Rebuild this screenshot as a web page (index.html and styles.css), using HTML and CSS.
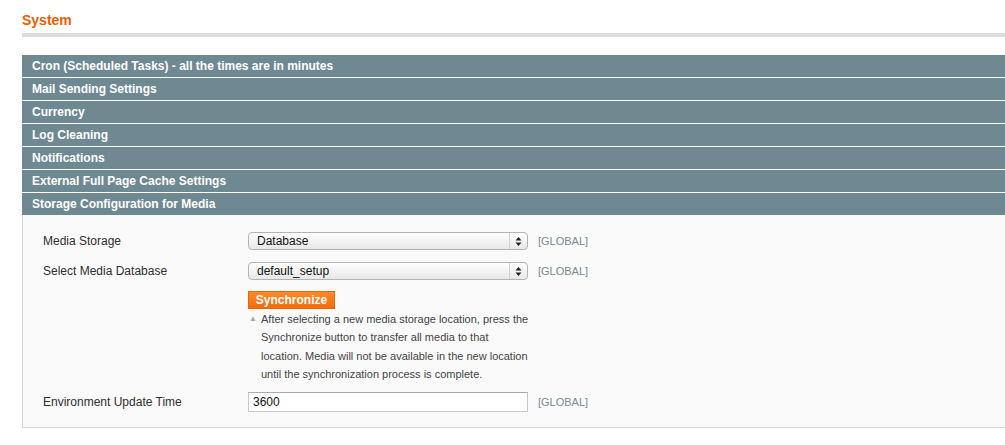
FILE: index.html
```html
<!DOCTYPE html>
<html lang="en">
<head>
  <meta charset="UTF-8">
  <title>System Configuration</title>
  <link rel="stylesheet" href="styles.css">
</head>
<body>
  <div class="page">
    <div class="page-head">
      <h3>System</h3>
    </div>

    <div class="section-list">
      <div class="section-head">Cron (Scheduled Tasks) - all the times are in minutes</div>
      <div class="section-head">Mail Sending Settings</div>
      <div class="section-head">Currency</div>
      <div class="section-head">Log Cleaning</div>
      <div class="section-head">Notifications</div>
      <div class="section-head">External Full Page Cache Settings</div>
      <div class="section-head">Storage Configuration for Media</div>

      <div class="section-body">
        <div class="form-row">
          <label class="label">Media Storage</label>
          <div class="value">
            <div class="select">
              <span class="select-text">Database</span>
              <span class="select-arrow">
                <svg width="7" height="11" viewBox="0 0 7 11"><path d="M3.5 1 L6.5 4.5 H0.5 Z M3.5 10 L6.5 6.5 H0.5 Z" fill="#222"/></svg>
              </span>
            </div>
          </div>
          <div class="scope">[GLOBAL]</div>
        </div>

        <div class="form-row">
          <label class="label">Select Media Database</label>
          <div class="value">
            <div class="select">
              <span class="select-text">default_setup</span>
              <span class="select-arrow">
                <svg width="7" height="11" viewBox="0 0 7 11"><path d="M3.5 1 L6.5 4.5 H0.5 Z M3.5 10 L6.5 6.5 H0.5 Z" fill="#222"/></svg>
              </span>
            </div>
          </div>
          <div class="scope">[GLOBAL]</div>
        </div>

        <div class="form-row form-row-sync">
          <div class="label"></div>
          <div class="value">
            <button class="btn-sync" type="button">Synchronize</button>
            <p class="note">
              <span class="note-arrow">&#9650;</span>
              <span>After selecting a new media storage location, press the<br>Synchronize button to transfer all media to that<br>location. Media will not be available in the new location<br>until the synchronization process is complete.</span>
            </p>
          </div>
          <div class="scope"></div>
        </div>

        <div class="form-row form-row-last">
          <label class="label label-input">Environment Update Time</label>
          <div class="value">
            <input class="input-text" type="text" value="3600">
          </div>
          <div class="scope scope-input">[GLOBAL]</div>
        </div>
      </div>
    </div>
  </div>
</body>
</html>
```

FILE: styles.css
```css
body {
  margin: 0;
  font-family: "Liberation Sans", Arial, sans-serif;
  font-size: 12px;
  color: #2f2f2f;
  background-color: #fff;
  overflow: hidden;
}

.page {
  padding: 12px 0 0 22px;
  margin-right: -10px;
}

.page-head {
  border-bottom: 4px solid #ddd;
  height: 21px;
  margin-bottom: 18px;
}

.page-head h3 {
  margin: 0;
  font-size: 14px;
  line-height: 17px;
  color: #eb5e00;
  font-weight: bold;
}

.section-head {
  height: 22px;
  line-height: 22px;
  padding-left: 10px;
  margin-bottom: 1px;
  background-color: #6f8992;
  color: #fff;
  font-weight: bold;
  font-size: 12px;
}

.section-body {
  margin-top: -1px;
  background-color: #fafafa;
  border-left: 1px solid #d6d6d6;
  border-bottom: 1px solid #d6d6d6;
  padding: 17px 0 15px 20px;
}

.form-row {
  display: grid;
  grid-template-columns: 205px 290px auto;
  margin-bottom: 12px;
}

.form-row-sync {
  margin-top: -1px;
  margin-bottom: 9px;
}

.form-row-last {
  margin-bottom: 0;
}

.label {
  line-height: 18px;
  color: #2f2f2f;
}

.label-input {
  line-height: 20px;
}

.scope {
  font-size: 11px;
  line-height: 18px;
  color: #7b8a92;
}

.scope-input {
  line-height: 20px;
}

.select {
  box-sizing: border-box;
  width: 280px;
  height: 18px;
  display: flex;
  align-items: center;
  border: 1px solid #b3b3b3;
  border-radius: 4px;
  background: linear-gradient(#ffffff, #f3f3f3 50%, #e8e8e8);
}

.select-text {
  flex: 1;
  padding-left: 8px;
  font-size: 12px;
  color: #111;
}

.select-arrow {
  width: 17px;
  height: 16px;
  display: flex;
  align-items: center;
  justify-content: center;
  border-left: 1px solid #d0d0d0;
}

.btn-sync {
  display: block;
  box-sizing: border-box;
  width: 87px;
  height: 18px;
  padding: 0;
  border: 1px solid #ed6502;
  background: linear-gradient(#fb8b2a, #f36b0b);
  color: #fff;
  font-family: "Liberation Sans", Arial, sans-serif;
  font-size: 12px;
  font-weight: bold;
  cursor: pointer;
}

.note {
  display: flex;
  margin: 1px 0 0 0;
  font-size: 11px;
  line-height: 18.3px;
  color: #444;
}

.note-arrow {
  width: 13px;
  flex: none;
  font-size: 8px;
  color: #a9a9a9;
  padding-left: 1px;
  box-sizing: border-box;
}

.input-text {
  box-sizing: border-box;
  width: 280px;
  height: 20px;
  margin: 0;
  padding: 0 4px;
  border: 1px solid #c8c8c8;
  border-top-color: #aaa;
  background-color: #fff;
  font-family: "Liberation Sans", Arial, sans-serif;
  font-size: 12px;
  color: #111;
}
```
